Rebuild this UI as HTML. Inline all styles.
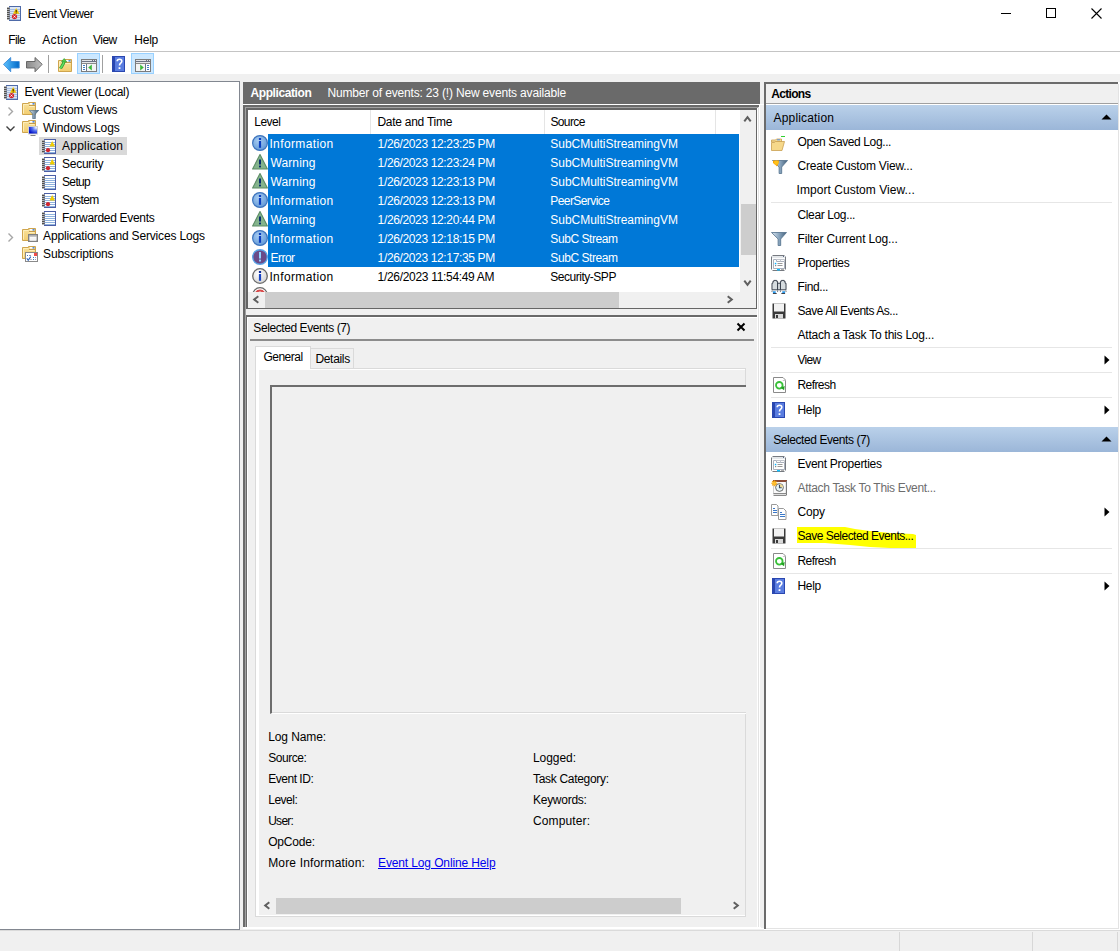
<!DOCTYPE html><html><head><meta charset="utf-8"><style>
html,body{margin:0;padding:0;width:1120px;height:951px;overflow:hidden;background:#f0f0f0;position:relative}
.t{position:absolute;font-family:"Liberation Sans",sans-serif;font-size:12px;line-height:14px;white-space:nowrap;color:#000;letter-spacing:-0.1px}
.r{position:absolute;overflow:visible}
</style></head><body>
<svg width="0" height="0" style="position:absolute"><defs>
<symbol id="spiral" viewBox="0 0 3 15"><path d="M1.5 1.5v12" stroke="#707070" stroke-width="3" stroke-dasharray="1 1"/></symbol>
<symbol id="log" viewBox="0 0 14 15">
 <rect x="2.5" y="0.5" width="11" height="14" fill="#fff" stroke="#4b5ea6"/>
 <path d="M3 3.5h10M3 5.5h10M3 7.5h10M3 9.5h10M3 11.5h10M3 13.5h10" stroke="#8fb3de"/>
 <rect x="0" y="1" width="2.6" height="13" fill="#b4b4b4"/><path d="M1.3 2v12" stroke="#505050" stroke-width="2.6" stroke-dasharray="1 1"/>
</symbol>
<symbol id="logw" viewBox="0 0 14 15">
 <use href="#log" width="14" height="15"/>
 <path d="M7.5 7.5L10.2 2L13 7.5Z" fill="#f2cd00"/>
 <circle cx="6" cy="11.2" r="2.1" fill="#d0242c"/>
</symbol>
<symbol id="evroot" viewBox="0 0 14 15">
 <rect x="2.5" y="0.5" width="11" height="14" fill="#dce7f6" stroke="#4e6aa8"/>
 <path d="M3 3.5h10M3 5.5h10M3 7.5h10M3 9.5h10M3 11.5h10M3 13.5h10" stroke="#a9bfe0"/>
 <rect x="0" y="1" width="2.6" height="13" fill="#b4b4b4"/><path d="M1.3 2v12" stroke="#505050" stroke-width="2.6" stroke-dasharray="1 1"/>
 <path d="M6 7.8L9.2 2L12.4 7.8Z" fill="#f4c400"/>
 <path d="M9.2 4v2.2M9.2 6.8v0.8" stroke="#3a2a00" stroke-width="1.1"/>
 <circle cx="7.5" cy="10.6" r="2.6" fill="#d3262d"/>
 <path d="M6.5 9.6l2 2M8.5 9.6l-2 2" stroke="#fff" stroke-width="0.9"/>
</symbol>
<symbol id="folder" viewBox="0 0 16 14">
 <defs><linearGradient id="gfo" x1="0" y1="0" x2="0" y2="1"><stop offset="0" stop-color="#f9e29c"/><stop offset="1" stop-color="#f2cd70"/></linearGradient></defs>
 <path d="M0.5 1.5H6.5V0.5H13.5V12.5H0.5Z" fill="url(#gfo)" stroke="#cfa54e"/>
 <path d="M1.5 11.5V2.5H6.3L7.3 4.5H12.5" fill="none" stroke="#fdeebb"/>
 <path d="M6.8 3.5H13.3" stroke="#c89d48"/>
 <rect x="8" y="1" width="3" height="1.6" fill="#fff"/>
 <rect x="10.5" y="1" width="2" height="1.6" fill="#4f8ae6"/>
</symbol>
<symbol id="funnelov" viewBox="0 0 10 9">
 <defs><linearGradient id="gfov" x1="0" x2="1"><stop offset="0" stop-color="#d8e6f0"/><stop offset="1" stop-color="#3a5670"/></linearGradient></defs>
 <path d="M0.3 0.3h9.4l-3.4 3.8v4.6h-2.6v-4.6z" fill="url(#gfov)" stroke="#4a6882" stroke-width="0.7"/>
</symbol>
<symbol id="monov" viewBox="0 0 10 10">
 <defs><radialGradient id="gmon" cx="0.85" cy="0.15" r="0.9"><stop offset="0" stop-color="#f4f8ff"/><stop offset="0.45" stop-color="#5c78f0"/><stop offset="1" stop-color="#0010c8"/></radialGradient></defs>
 <rect x="0.5" y="0.5" width="9" height="7.5" fill="url(#gmon)" stroke="#cfcfcf"/>
 <path d="M2.5 9.5h5" stroke="#808080"/>
</symbol>
<symbol id="winov" viewBox="0 0 10 8">
 <rect x="0.7" y="0.7" width="8.6" height="6.6" fill="#fff" stroke="#808080" stroke-width="1.4"/>
 <rect x="1.4" y="1.4" width="7.2" height="1.2" fill="#a0a0a0"/>
 <rect x="2" y="3.5" width="6" height="3" fill="#f4f4f4"/>
</symbol>
<symbol id="subov" viewBox="0 0 13 10">
 <rect x="0.5" y="0.5" width="12" height="9" fill="#fff" stroke="#8a8a8a"/>
 <rect x="9" y="1" width="3" height="3" fill="#f04a4a"/>
 <rect x="2" y="3" width="1" height="1" fill="#3c7cc0"/><rect x="4" y="3" width="2" height="1" fill="#9a98b8"/>
 <rect x="8" y="5" width="1" height="1" fill="#3c7cc0"/><rect x="10" y="5" width="1" height="1" fill="#9a98b8"/>
 <rect x="8" y="7" width="1" height="1" fill="#3c7cc0"/><rect x="10" y="7" width="1" height="1" fill="#9a98b8"/>
 <rect x="5" y="7" width="2" height="1" fill="#b8b8c8"/>
 <path d="M1.8 6.2l1.4 2l2.6 -3.6" stroke="#2a62b8" stroke-width="1.1" fill="none"/>
</symbol>
<symbol id="info_sel" viewBox="0 0 16 16">
 <defs><radialGradient id="gis" cx="0.4" cy="0.35" r="0.7"><stop offset="0" stop-color="#a9cdf2"/><stop offset="1" stop-color="#5f97d6"/></radialGradient></defs>
 <circle cx="8" cy="8" r="7.4" fill="url(#gis)" stroke="#3d74bd" stroke-width="1.2"/>
 <rect x="6.9" y="6" width="2.2" height="6.8" fill="#0a3dc0"/>
 <rect x="6.9" y="3" width="2.2" height="2" fill="#0a3dc0"/>
</symbol>
<symbol id="warn_sel" viewBox="0 0 16 16">
 <path d="M8 0.6L15.4 15H0.6Z" fill="#84b48c" stroke="#5c8c66" stroke-width="1.1" stroke-linejoin="round"/>
 <rect x="7" y="5.5" width="2" height="5" fill="#082b6e"/>
 <rect x="7" y="11.6" width="2" height="1.8" fill="#082b6e"/>
</symbol>
<symbol id="err_sel" viewBox="0 0 16 16">
 <circle cx="8" cy="8" r="7.3" fill="#6a4a88" stroke="#58a2e6" stroke-width="1.4"/>
 <rect x="7" y="3" width="2" height="6.5" fill="#8fd4ff"/>
 <rect x="7" y="10.6" width="2" height="1.9" fill="#8fd4ff"/>
</symbol>
<symbol id="info_un" viewBox="0 0 16 16">
 <defs><radialGradient id="giu" cx="0.4" cy="0.35" r="0.75"><stop offset="0" stop-color="#ffffff"/><stop offset="1" stop-color="#cfcfcf"/></radialGradient></defs>
 <circle cx="8" cy="8" r="7.3" fill="url(#giu)" stroke="#6a6a6a" stroke-width="1.3"/>
 <rect x="6.9" y="6" width="2.2" height="6.8" fill="#1846c4"/>
 <rect x="6.9" y="3" width="2.2" height="2" fill="#0a2a9a"/>
</symbol>
<symbol id="helpq" viewBox="0 0 13 16">
 <rect x="0" y="0" width="13" height="16" fill="#2a47b0"/>
 <rect x="3" y="1" width="9" height="14" fill="#5a7de0"/>
 <path d="M5.2 5.2c0-2.6 4.6-2.6 4.6 0c0 2-2.3 2-2.3 4.2" fill="none" stroke="#fff" stroke-width="1.6"/>
 <rect x="6.6" y="11.2" width="1.8" height="1.8" fill="#fff"/>
</symbol>
<symbol id="floppy" viewBox="0 0 14 16">
 <path d="M0.5 0.5h13v15h-13z" fill="#3a3a3a"/>
 <rect x="2" y="0.5" width="10" height="8" fill="#f2f2f2"/>
 <rect x="3" y="11" width="8" height="4.5" fill="#d9d9d9"/>
 <rect x="4" y="12" width="2" height="3" fill="#3a3a3a"/>
</symbol>
<symbol id="refresh" viewBox="0 0 13 16">
 <path d="M0.5 0.5h9.5l2.5 2.5v12.5h-12z" fill="#fff" stroke="#8a8a8a"/>
 <path d="M9.8 3.5h2.7" stroke="#c8c8c8"/>
 <circle cx="6.3" cy="8.3" r="3.3" fill="none" stroke="#38c038" stroke-width="1.8"/>
 <path d="M7.5 10.8l4.2 -1.8l-0.6 4.2z" fill="#22a022"/>
</symbol>
<symbol id="props" viewBox="0 0 15 16">
 <rect x="1" y="1" width="13" height="14" fill="#fdfdfd"/>
 <path d="M1.5 0.5H13.5M0.5 1.5V14.5M14.5 1.5V14.5M1.5 15.5H13.5" stroke="#767a80"/>
 <rect x="1" y="1" width="13" height="2" fill="#e4e7ea"/>
 <rect x="12" y="1" width="1" height="1" fill="#5a6a88"/>
 <path d="M2.5 13.5V4.5H5.5V6.5H13.5V13.5Z" fill="#fff" stroke="#aab0bc"/>
 <path d="M5.5 4.5H13.5V6.5M9.5 4.5V6.5" fill="none" stroke="#c0c4cc"/>
 <rect x="3.8" y="7.8" width="1.5" height="1.5" fill="#10b4ff"/>
 <rect x="4" y="10" width="1.2" height="1.2" fill="#888"/>
 <path d="M6.5 8.5h5M6.5 10.5h5" stroke="#999"/>
 <rect x="6" y="14" width="3" height="1.5" fill="#10c0ff"/>
 <rect x="10" y="14" width="3" height="1" fill="#b0b0b0"/>
</symbol>
<symbol id="binoc" viewBox="0 0 16 16">
 <path d="M0.5 11.5V4.5h1v-2h1v-1h3v1h1v9z" fill="#d6dcdf" stroke="#343c48"/>
 <path d="M15.5 11.5V4.5h-1v-2h-1v-1h-3v1h-1v9z" fill="#d6dcdf" stroke="#343c48"/>
 <rect x="6.5" y="4.5" width="3" height="7" fill="#d6dcdf" stroke="#343c48"/>
 <path d="M3 13v2M13 13v2" stroke="#2a96e8" stroke-width="3"/>
 <path d="M0.5 12.5v1M6.5 12.5v1M9.5 12.5v1M15.5 12.5v1M1.5 15.5h4M10.5 15.5h4" stroke="#2a3038"/>
</symbol>
<symbol id="funnel" viewBox="0 0 16 14">
 <defs><linearGradient id="gf" x1="0" x2="1"><stop offset="0" stop-color="#dfe9f2"/><stop offset="0.5" stop-color="#8aa6bf"/><stop offset="1" stop-color="#44607a"/></linearGradient></defs>
 <path d="M0.5 0.5h15l-5.8 6.5v6.5h-2.6v-6.5z" fill="url(#gf)" stroke="#52708c" stroke-width="0.8"/>
</symbol>
<symbol id="funnelstar" viewBox="0 0 16 14">
 <use href="#funnel" width="16" height="14"/>
 <path d="M1 0.5h6l-0.5 3l-1.5 3l-1.5 -1.5l-2.5 -2z" fill="#ffa500"/>
 <circle cx="4.3" cy="2.6" r="2.2" fill="#ffc21a"/>
</symbol>
<symbol id="openfold" viewBox="0 0 15 15">
 <rect x="10" y="0" width="4" height="1" fill="#30d030"/>
 <path d="M0.5 4h4l1 -1h5v3h-10z" fill="#f5dc94" stroke="#c9a050" stroke-width="0.8"/>
 <path d="M0.5 14.5v-8h3l1 -1h9l-2.5 9z" fill="#f6d88a" stroke="#c9a050" stroke-width="0.8"/>
 <rect x="6" y="3.3" width="3" height="1" fill="#5a90e0"/>
</symbol>
<symbol id="clock" viewBox="0 0 16 16">
 <rect x="2.5" y="1.5" width="12.5" height="12.5" fill="#fafafa" stroke="#d0d0d0"/>
 <rect x="2" y="0" width="14" height="2" fill="#8c4c38"/>
 <rect x="15" y="1" width="1" height="14" fill="#7a7a7a"/>
 <path d="M2.5 13.5h13M2.5 15.5h13" stroke="#8a8a8a"/>
 <rect x="3" y="14" width="12" height="1" fill="#dedede"/>
 <circle cx="8.5" cy="7.5" r="3.9" fill="#e6f4f8" stroke="#5a5a5a" stroke-width="0.9"/>
 <path d="M8.5 7.5V3.9A3.6 3.6 0 0 1 12.1 7.5Z" fill="#f0dc98"/>
 <path d="M8.5 4.8v3h2.2" stroke="#3a4a60" fill="none" stroke-width="1.1"/>
 <path d="M3.3 0.3v6M0.3 3.3h6M1.2 1.2l4.2 4.2M5.4 1.2L1.2 5.4" stroke="#f4a000" stroke-width="1.1"/>
 <circle cx="3.3" cy="3.3" r="1.8" fill="#ffc030"/>
</symbol>
<symbol id="copy" viewBox="0 0 16 16">
 <path d="M0.5 0.5h5l1.5 1.5v9.5h-6.5z" fill="#fff" stroke="#9a9a9a"/>
 <path d="M7.5 4.5h5l2.5 2.5v8.5h-7.5z" fill="#fff" stroke="#9a9a9a"/>
 <path d="M2 4.5h2M2 6.5h4M2 8.5h4M9 8.5h2M9 10.5h5M9 12.5h5" stroke="#3a78c8"/>
</symbol>
<symbol id="pane" viewBox="0 0 16 13">
 <rect x="0.5" y="0.5" width="15" height="12" fill="#fff" stroke="#7c7c7c"/>
 <rect x="1" y="1" width="14" height="1" fill="#e2e4e8"/>
 <rect x="11" y="1" width="1" height="1" fill="#6a7080"/><rect x="13" y="1" width="1" height="1" fill="#6a7080"/>
 <rect x="1" y="2" width="14" height="1" fill="#6b7282"/>
 <rect x="1" y="3" width="14" height="1" fill="#e4e6ea"/>
 <rect x="1" y="4" width="14" height="1" fill="#8a8a8a"/>
</symbol>
</defs></svg>
<div class="r" style="left:0px;top:0px;width:1120px;height:51px;background:#fff"></div>
<div class="r" style="left:0px;top:51px;width:1120px;height:1px;background:#c4c4c4"></div>
<div class="r" style="left:0px;top:52px;width:1120px;height:22px;background:#fff"></div>
<div class="r" style="left:0px;top:74px;width:1120px;height:7px;background:#f0f0f0"></div>
<svg class="r" style="left:7px;top:6px" width="14" height="15"><use href="#evroot" width="14" height="15"/></svg>
<div class="t" style="left:27.7px;top:7px;;letter-spacing:-0.403px">Event Viewer</div>
<div class="r" style="left:1001px;top:13px;width:10px;height:1px;background:#000"></div>
<div class="r" style="left:1046px;top:8px;width:10px;height:10px;border:1px solid #000;box-sizing:border-box"></div>
<svg class="r" style="left:1091px;top:8px;" width="11" height="11" viewBox="0 0 11 11"><path d="M0.5 0.5L10.5 10.5M10.5 0.5L0.5 10.5" stroke="#000" stroke-width="1.1"/></svg>
<div class="t" style="left:8.3px;top:33px;;letter-spacing:-0.621px">File</div>
<div class="t" style="left:42.2px;top:33px;;letter-spacing:0.344px">Action</div>
<div class="t" style="left:92.9px;top:33px;;letter-spacing:-0.476px">View</div>
<div class="t" style="left:134.3px;top:33px;;letter-spacing:-0.235px">Help</div>
<svg class="r" style="left:3px;top:57px;" width="17" height="15" viewBox="0 0 17 15"><defs><linearGradient id="gba" x1="0" x2="1"><stop offset="0" stop-color="#5ec3ff"/><stop offset="1" stop-color="#0068c8"/></linearGradient></defs><path d="M0.5 7.3L7.7 0.5v4h8.5v6.5h-8.5v3.8z" fill="url(#gba)" stroke="#3c8ad8" stroke-width="0.9" stroke-linejoin="round"/></svg>
<svg class="r" style="left:26px;top:57px;" width="17" height="15" viewBox="0 0 17 15"><defs><linearGradient id="gfa" x1="0" x2="1"><stop offset="0" stop-color="#8a8a8a"/><stop offset="1" stop-color="#c0c0c0"/></linearGradient></defs><path d="M16.2 7.3L9 0.5v4h-8.5v6.5h8.5v3.8z" fill="url(#gfa)" stroke="#5c5c5c" stroke-width="0.9" stroke-linejoin="round"/></svg>
<div class="r" style="left:48px;top:55px;width:1px;height:18px;background:#a0a0a0"></div>
<svg class="r" style="left:58px;top:59px;overflow:visible" width="16" height="14" viewBox="0 0 16 14"><use href="#folder" width="16" height="14"/><path d="M2.5 9.5C3.5 7 5.5 6 6 2.5" stroke="#2e9a2e" stroke-width="3" fill="none"/><path d="M2.5 9.5C3.5 7 5.5 6 6 2.5" stroke="#62e062" stroke-width="1.6" fill="none"/><path d="M3.5 2.5L6.2 -0.5L8.8 3z" fill="#4cd04c" stroke="#2e9a2e" stroke-width="0.6"/></svg>
<div class="r" style="left:77px;top:53px;width:23px;height:21px;background:#cce8ff;border:1px solid #99d1ff;box-sizing:border-box"></div>
<svg class="r" style="left:81px;top:59px;" width="16" height="13" viewBox="0 0 16 13"><use href="#pane" width="16" height="13"/><rect x="5" y="5" width="1" height="7" fill="#66778c"/><rect x="6" y="5" width="9" height="7" fill="#f4f4f4"/><path d="M2 6.5h2M2 8.5h2M2 10.5h2" stroke="#3f7cc4"/><path d="M10.8 5.6v5.8l-3.6-2.9z" fill="#3ab83a"/></svg>
<div class="r" style="left:102px;top:55px;width:1px;height:18px;background:#a0a0a0"></div>
<svg class="r" style="left:112px;top:56px" width="13" height="16"><use href="#helpq" width="13" height="16"/></svg>
<div class="r" style="left:131px;top:53px;width:23px;height:21px;background:#cce8ff;border:1px solid #99d1ff;box-sizing:border-box"></div>
<svg class="r" style="left:135px;top:59px;" width="16" height="13" viewBox="0 0 16 13"><use href="#pane" width="16" height="13"/><rect x="10" y="5" width="1" height="7" fill="#66778c"/><rect x="1" y="5" width="9" height="7" fill="#f4f4f4"/><path d="M12 6.5h2M12 8.5h2M12 10.5h2" stroke="#3f7cc4"/><path d="M5.2 5.6v5.8l3.6-2.9z" fill="#3ab83a"/></svg>
<div class="r" style="left:0px;top:81px;width:240px;height:849px;background:#fff;border-top:1px solid #828790;border-right:1px solid #828790;border-bottom:1px solid #828790;box-sizing:border-box"></div>
<div class="r" style="left:39px;top:137px;width:88px;height:18px;background:#d9d9d9"></div>
<div class="t" style="left:24.4px;top:85px;;letter-spacing:-0.289px">Event Viewer (Local)</div>
<div class="t" style="left:43.1px;top:103px;;letter-spacing:-0.188px">Custom Views</div>
<div class="t" style="left:43.1px;top:121px;;letter-spacing:-0.130px">Windows Logs</div>
<div class="t" style="left:62px;top:139px;;letter-spacing:0.227px">Application</div>
<div class="t" style="left:62px;top:157px;;letter-spacing:-0.264px">Security</div>
<div class="t" style="left:62px;top:175px;;letter-spacing:-0.646px">Setup</div>
<div class="t" style="left:62px;top:193px;;letter-spacing:-0.542px">System</div>
<div class="t" style="left:62px;top:211px;;letter-spacing:-0.312px">Forwarded Events</div>
<div class="t" style="left:43.1px;top:229px;;letter-spacing:-0.171px">Applications and Services Logs</div>
<div class="t" style="left:43.1px;top:247px;;letter-spacing:-0.128px">Subscriptions</div>
<svg class="r" style="left:4px;top:85px" width="14" height="15"><use href="#evroot" width="14" height="15"/></svg>
<svg class="r" style="left:7px;top:106px;" width="8" height="11" viewBox="0 0 8 11"><path d="M1.5 1.5L5.5 5.5L1.5 9.5" stroke="#a6a6a6" stroke-width="1.4" fill="none"/></svg>
<svg class="r" style="left:5px;top:125px;" width="11" height="8" viewBox="0 0 11 8"><path d="M1.5 1.5L5.5 5.5L9.5 1.5" stroke="#404040" stroke-width="1.4" fill="none"/></svg>
<svg class="r" style="left:7px;top:232px;" width="8" height="11" viewBox="0 0 8 11"><path d="M1.5 1.5L5.5 5.5L1.5 9.5" stroke="#a6a6a6" stroke-width="1.4" fill="none"/></svg>
<svg class="r" style="left:22px;top:102px" width="16" height="14"><use href="#folder" width="16" height="14"/></svg>
<svg class="r" style="left:22px;top:120px" width="16" height="14"><use href="#folder" width="16" height="14"/></svg>
<svg class="r" style="left:22px;top:228px" width="16" height="14"><use href="#folder" width="16" height="14"/></svg>
<svg class="r" style="left:22px;top:246px" width="16" height="14"><use href="#folder" width="16" height="14"/></svg>
<svg class="r" style="left:29px;top:110px" width="10" height="9"><use href="#funnelov" width="10" height="9"/></svg>
<svg class="r" style="left:28px;top:126px" width="10" height="10"><use href="#monov" width="10" height="10"/></svg>
<svg class="r" style="left:28px;top:234px" width="10" height="8"><use href="#winov" width="10" height="8"/></svg>
<svg class="r" style="left:25px;top:252px" width="13" height="10"><use href="#subov" width="13" height="10"/></svg>
<svg class="r" style="left:42px;top:139px" width="14" height="15"><use href="#logw" width="14" height="15"/></svg>
<svg class="r" style="left:42px;top:157px" width="14" height="15"><use href="#logw" width="14" height="15"/></svg>
<svg class="r" style="left:42px;top:175px" width="14" height="15"><use href="#log" width="14" height="15"/></svg>
<svg class="r" style="left:42px;top:193px" width="14" height="15"><use href="#logw" width="14" height="15"/></svg>
<svg class="r" style="left:42px;top:211px" width="14" height="15"><use href="#log" width="14" height="15"/></svg>
<div class="r" style="left:243px;top:82px;width:517px;height:22px;background:#6a6a6a"></div>
<div class="t" style="left:250.5px;top:86px;color:#fff;font-weight:bold;letter-spacing:-0.410px">Application</div>
<div class="t" style="left:327.5px;top:86px;color:#fff;letter-spacing:-0.171px">Number of events: 23 (!) New events available</div>
<div class="r" style="left:243px;top:104px;width:521px;height:1px;background:#fff"></div>
<div class="r" style="left:243px;top:105px;width:518px;height:822px;background:#f0f0f0"></div>
<div class="r" style="left:243px;top:105px;width:516px;height:2px;background:#6a6a6a"></div>
<div class="r" style="left:243px;top:105px;width:2px;height:822px;background:#6a6a6a"></div>
<div class="r" style="left:245px;top:107px;width:514px;height:1px;background:#a0a0a0"></div>
<div class="r" style="left:245px;top:107px;width:1px;height:820px;background:#a0a0a0"></div>
<div class="r" style="left:246px;top:108px;width:511px;height:201px;background:#666"></div>
<div class="r" style="left:248px;top:110px;width:508px;height:198px;background:#fff"></div>
<div class="r" style="left:757px;top:108px;width:1px;height:819px;background:#fff"></div>
<div class="r" style="left:758px;top:107px;width:1px;height:820px;background:#e3e3e3"></div>
<div class="r" style="left:759px;top:105px;width:1px;height:822px;background:#fff"></div>
<div class="r" style="left:243px;top:927px;width:518px;height:1px;background:#fff"></div>
<div class="t" style="left:254.3px;top:115px;;letter-spacing:-0.530px">Level</div>
<div class="t" style="left:377.4px;top:115px;;letter-spacing:-0.257px">Date and Time</div>
<div class="t" style="left:550.4px;top:115px;;letter-spacing:-0.610px">Source</div>
<div class="r" style="left:370px;top:110px;width:1px;height:24px;background:#e5e5e5"></div>
<div class="r" style="left:544px;top:110px;width:1px;height:24px;background:#e5e5e5"></div>
<div class="r" style="left:715px;top:110px;width:1px;height:24px;background:#e5e5e5"></div>
<div class="r" style="left:268px;top:134px;width:471px;height:133px;background:#0078d7"></div>
<div class="t" style="left:269.4px;top:137px;color:#fff;letter-spacing:0.384px">Information</div>
<div class="t" style="left:377.6px;top:137px;color:#fff;letter-spacing:-0.358px">1/26/2023 12:23:25 PM</div>
<div class="t" style="left:550.3px;top:137px;color:#fff;letter-spacing:-0.024px">SubCMultiStreamingVM</div>
<svg class="r" style="left:252px;top:135px" width="16" height="16"><use href="#info_sel" width="16" height="16"/></svg>
<div class="t" style="left:270.4px;top:156px;color:#fff;letter-spacing:0.139px">Warning</div>
<div class="t" style="left:377.6px;top:156px;color:#fff;letter-spacing:-0.358px">1/26/2023 12:23:24 PM</div>
<div class="t" style="left:550.3px;top:156px;color:#fff;letter-spacing:-0.024px">SubCMultiStreamingVM</div>
<svg class="r" style="left:252px;top:154px" width="16" height="16"><use href="#warn_sel" width="16" height="16"/></svg>
<div class="t" style="left:270.4px;top:175px;color:#fff;letter-spacing:0.139px">Warning</div>
<div class="t" style="left:377.6px;top:175px;color:#fff;letter-spacing:-0.358px">1/26/2023 12:23:13 PM</div>
<div class="t" style="left:550.3px;top:175px;color:#fff;letter-spacing:-0.024px">SubCMultiStreamingVM</div>
<svg class="r" style="left:252px;top:173px" width="16" height="16"><use href="#warn_sel" width="16" height="16"/></svg>
<div class="t" style="left:269.4px;top:194px;color:#fff;letter-spacing:0.384px">Information</div>
<div class="t" style="left:377.6px;top:194px;color:#fff;letter-spacing:-0.358px">1/26/2023 12:23:13 PM</div>
<div class="t" style="left:550.3px;top:194px;color:#fff;letter-spacing:-0.579px">PeerService</div>
<svg class="r" style="left:252px;top:192px" width="16" height="16"><use href="#info_sel" width="16" height="16"/></svg>
<div class="t" style="left:270.4px;top:213px;color:#fff;letter-spacing:0.139px">Warning</div>
<div class="t" style="left:377.6px;top:213px;color:#fff;letter-spacing:-0.358px">1/26/2023 12:20:44 PM</div>
<div class="t" style="left:550.3px;top:213px;color:#fff;letter-spacing:-0.024px">SubCMultiStreamingVM</div>
<svg class="r" style="left:252px;top:211px" width="16" height="16"><use href="#warn_sel" width="16" height="16"/></svg>
<div class="t" style="left:269.4px;top:232px;color:#fff;letter-spacing:0.384px">Information</div>
<div class="t" style="left:377.6px;top:232px;color:#fff;letter-spacing:-0.358px">1/26/2023 12:18:15 PM</div>
<div class="t" style="left:550.3px;top:232px;color:#fff;letter-spacing:-0.423px">SubC Stream</div>
<svg class="r" style="left:252px;top:230px" width="16" height="16"><use href="#info_sel" width="16" height="16"/></svg>
<div class="t" style="left:270.4px;top:251px;color:#fff;letter-spacing:-0.492px">Error</div>
<div class="t" style="left:377.6px;top:251px;color:#fff;letter-spacing:-0.358px">1/26/2023 12:17:35 PM</div>
<div class="t" style="left:550.3px;top:251px;color:#fff;letter-spacing:-0.423px">SubC Stream</div>
<svg class="r" style="left:252px;top:249px" width="16" height="16"><use href="#err_sel" width="16" height="16"/></svg>
<div class="t" style="left:269.4px;top:270px;color:#000;letter-spacing:0.384px">Information</div>
<div class="t" style="left:377.6px;top:270px;color:#000;letter-spacing:-0.314px">1/26/2023 11:54:49 AM</div>
<div class="t" style="left:550.3px;top:270px;color:#000;letter-spacing:-0.477px">Security-SPP</div>
<svg class="r" style="left:252px;top:268px" width="16" height="16"><use href="#info_un" width="16" height="16"/></svg>
<svg class="r" style="left:252px;top:287px;" width="16" height="5" viewBox="0 0 16 5"><circle cx="8" cy="8" r="7.3" fill="#fff" stroke="#6a6a6a" stroke-width="1.3"/><path d="M4 5.5a5 5 0 0 1 8 0" stroke="#d84a4a" stroke-width="2" fill="none"/></svg>
<div class="r" style="left:740px;top:110px;width:16px;height:182px;background:#f0f0f0"></div>
<div class="r" style="left:741px;top:204px;width:15px;height:51px;background:#cdcdcd"></div>
<svg class="r" style="left:743px;top:115px;" width="9" height="8" viewBox="0 0 9 8"><path d="M1.3 6.3L4.5 2.2L7.7 6.3" stroke="#5f5f5f" stroke-width="2" fill="none"/></svg>
<svg class="r" style="left:743px;top:279px;" width="9" height="8" viewBox="0 0 9 8"><path d="M1.3 1.7L4.5 5.8L7.7 1.7" stroke="#5f5f5f" stroke-width="2" fill="none"/></svg>
<div class="r" style="left:248px;top:292px;width:508px;height:16px;background:#f0f0f0"></div>
<div class="r" style="left:265px;top:292px;width:354px;height:16px;background:#cdcdcd"></div>
<svg class="r" style="left:252px;top:295px;" width="8" height="9" viewBox="0 0 8 9"><path d="M6.3 1.3L2.2 4.5L6.3 7.7" stroke="#5f5f5f" stroke-width="2" fill="none"/></svg>
<svg class="r" style="left:726px;top:295px;" width="8" height="9" viewBox="0 0 8 9"><path d="M1.7 1.3L5.8 4.5L1.7 7.7" stroke="#5f5f5f" stroke-width="2" fill="none"/></svg>
<div class="r" style="left:246px;top:315px;width:511px;height:612px;background:#f0f0f0"></div>
<div class="r" style="left:246px;top:315px;width:511px;height:2px;background:#696969"></div>
<div class="r" style="left:246px;top:315px;width:1px;height:612px;background:#696969"></div>
<div class="r" style="left:247px;top:317px;width:510px;height:1px;background:#fff"></div>
<div class="r" style="left:247px;top:317px;width:1px;height:610px;background:#fff"></div>
<div class="t" style="left:253.3px;top:321px;;letter-spacing:-0.418px">Selected Events (7)</div>
<svg class="r" style="left:736px;top:322px;" width="10" height="10" viewBox="0 0 10 10"><path d="M1.5 1.5L8.5 8.5M8.5 1.5L1.5 8.5" stroke="#000" stroke-width="2"/></svg>
<div class="r" style="left:250px;top:339px;width:504px;height:2px;background:#8c8c8c"></div>
<div class="r" style="left:255px;top:368px;width:491px;height:549px;background:#fff;border:1px solid #dadada;box-sizing:border-box"></div>
<div class="r" style="left:259px;top:370px;width:486px;height:545px;background:#f0f0f0"></div>
<div class="r" style="left:255px;top:346px;width:56px;height:23px;background:#fff;border:1px solid #dadada;border-bottom:none;box-sizing:border-box"></div>
<div class="r" style="left:310px;top:348px;width:44px;height:20px;background:#f0f0f0;border:1px solid #dadada;border-bottom:none;box-sizing:border-box"></div>
<div class="t" style="left:263.4px;top:350px;;letter-spacing:-0.488px">General</div>
<div class="t" style="left:315.4px;top:352px;;letter-spacing:-0.313px">Details</div>
<div class="r" style="left:270px;top:385px;width:476px;height:329px;background:#f0f0f0;border-left:2px solid #6d6d6d;border-top:2px solid #6d6d6d;border-bottom:1px solid #fff;box-shadow:inset 0 -1px 0 #dadada;box-sizing:border-box"></div>
<div class="t" style="left:268.2px;top:730px;;letter-spacing:-0.096px">Log Name:</div>
<div class="t" style="left:268.2px;top:751px;;letter-spacing:-0.454px">Source:</div>
<div class="t" style="left:268.2px;top:772px;;letter-spacing:-0.477px">Event ID:</div>
<div class="t" style="left:268.2px;top:793px;;letter-spacing:-0.477px">Level:</div>
<div class="t" style="left:268.2px;top:814px;;letter-spacing:-0.734px">User:</div>
<div class="t" style="left:268.2px;top:835px;;letter-spacing:-0.199px">OpCode:</div>
<div class="t" style="left:268.2px;top:856px;;letter-spacing:0.162px">More Information:</div>
<div class="t" style="left:533px;top:751px;;letter-spacing:-0.057px">Logged:</div>
<div class="t" style="left:533px;top:772px;;letter-spacing:-0.308px">Task Category:</div>
<div class="t" style="left:533px;top:793px;;letter-spacing:-0.273px">Keywords:</div>
<div class="t" style="left:533px;top:814px;;letter-spacing:0.127px">Computer:</div>
<div class="t" style="left:378px;top:856px;color:#0000ee;text-decoration:underline;letter-spacing:-0.125px">Event Log Online Help</div>
<div class="r" style="left:259px;top:898px;width:486px;height:16px;background:#f0f0f0"></div>
<div class="r" style="left:276px;top:898px;width:405px;height:16px;background:#cdcdcd"></div>
<svg class="r" style="left:263px;top:901px;" width="8" height="9" viewBox="0 0 8 9"><path d="M6.3 1.3L2.2 4.5L6.3 7.7" stroke="#5f5f5f" stroke-width="2" fill="none"/></svg>
<svg class="r" style="left:732px;top:901px;" width="8" height="9" viewBox="0 0 8 9"><path d="M1.7 1.3L5.8 4.5L1.7 7.7" stroke="#5f5f5f" stroke-width="2" fill="none"/></svg>
<div class="r" style="left:764px;top:82px;width:355px;height:847px;background:#fff"></div>
<div class="r" style="left:764px;top:82px;width:2px;height:847px;background:#6b6b6b"></div>
<div class="r" style="left:764px;top:82px;width:354px;height:2px;background:#6b6b6b"></div>
<div class="r" style="left:766px;top:84px;width:352px;height:19px;background:#f0f0f0"></div>
<div class="r" style="left:766px;top:103px;width:352px;height:1px;background:#a0a0a0"></div>
<div class="t" style="left:771.25px;top:87px;;font-weight:bold;letter-spacing:-0.697px">Actions</div>
<div class="r" style="left:766px;top:105px;width:352px;height:25px;background:linear-gradient(#bad1ea,#9bb6d8)"></div>
<div class="t" style="left:773.5px;top:111px;;letter-spacing:0.177px">Application</div>
<div class="r" style="left:766px;top:427px;width:352px;height:25px;background:linear-gradient(#bad1ea,#9bb6d8)"></div>
<div class="t" style="left:773.2px;top:433px;;letter-spacing:-0.423px">Selected Events (7)</div>
<svg class="r" style="left:1101px;top:114px;" width="11" height="6" viewBox="0 0 11 6"><path d="M0.5 5.5L5.5 0.5L10.5 5.5z" fill="#000"/></svg>
<svg class="r" style="left:1101px;top:436px;" width="11" height="6" viewBox="0 0 11 6"><path d="M0.5 5.5L5.5 0.5L10.5 5.5z" fill="#000"/></svg>
<svg class="r" style="left:790px;top:520px;" width="130" height="35" viewBox="0 0 130 35"><polygon fill="#ffff00" points="7,7 55,7 65,9 80,11 100,13 123,14 126,15 126,29 100,28 80,27 60,25 35,23 7,23"/></svg>
<div class="t" style="left:797.5px;top:135px;color:#000;letter-spacing:-0.384px">Open Saved Log...</div>
<svg class="r" style="left:771px;top:136px" width="15" height="15"><use href="#openfold" width="15" height="15"/></svg>
<div class="t" style="left:797.5px;top:159px;color:#000;letter-spacing:-0.191px">Create Custom View...</div>
<svg class="r" style="left:772px;top:160px" width="16" height="14"><use href="#funnelstar" width="16" height="14"/></svg>
<div class="t" style="left:796.5px;top:183px;color:#000;letter-spacing:0.054px">Import Custom View...</div>
<div class="t" style="left:797.5px;top:208px;color:#000;letter-spacing:-0.373px">Clear Log...</div>
<div class="t" style="left:797.5px;top:232px;color:#000;letter-spacing:-0.157px">Filter Current Log...</div>
<svg class="r" style="left:771px;top:232px" width="16" height="14"><use href="#funnel" width="16" height="14"/></svg>
<div class="t" style="left:797.5px;top:256px;color:#000;letter-spacing:-0.271px">Properties</div>
<svg class="r" style="left:771px;top:255px" width="15" height="16"><use href="#props" width="15" height="16"/></svg>
<div class="t" style="left:797.5px;top:280px;color:#000;letter-spacing:-0.402px">Find...</div>
<svg class="r" style="left:771px;top:279px" width="16" height="15"><use href="#binoc" width="16" height="15"/></svg>
<div class="t" style="left:797.5px;top:304px;color:#000;letter-spacing:-0.457px">Save All Events As...</div>
<svg class="r" style="left:772px;top:303px" width="14" height="16"><use href="#floppy" width="14" height="16"/></svg>
<div class="t" style="left:797.5px;top:328px;color:#000;letter-spacing:-0.229px">Attach a Task To this Log...</div>
<div class="t" style="left:797.5px;top:353px;color:#000;letter-spacing:-0.709px">View</div>
<div class="t" style="left:797.5px;top:378px;color:#000;letter-spacing:-0.574px">Refresh</div>
<svg class="r" style="left:773px;top:377px" width="13" height="16"><use href="#refresh" width="13" height="16"/></svg>
<div class="t" style="left:797.5px;top:403px;color:#000;letter-spacing:-0.335px">Help</div>
<svg class="r" style="left:772px;top:402px" width="13" height="16"><use href="#helpq" width="13" height="16"/></svg>
<div class="t" style="left:797.5px;top:457px;color:#000;letter-spacing:-0.287px">Event Properties</div>
<svg class="r" style="left:771px;top:456px" width="15" height="16"><use href="#props" width="15" height="16"/></svg>
<div class="t" style="left:797.5px;top:481px;color:#6d6d6d;letter-spacing:-0.323px">Attach Task To This Event...</div>
<svg class="r" style="left:771px;top:480px" width="16" height="16"><use href="#clock" width="16" height="16"/></svg>
<div class="t" style="left:797.5px;top:505px;color:#000;letter-spacing:-0.171px">Copy</div>
<svg class="r" style="left:771px;top:504px" width="16" height="16"><use href="#copy" width="16" height="16"/></svg>
<div class="t" style="left:797.5px;top:529px;color:#000;letter-spacing:-0.508px">Save Selected Events...</div>
<svg class="r" style="left:772px;top:528px" width="14" height="16"><use href="#floppy" width="14" height="16"/></svg>
<div class="t" style="left:797.5px;top:554px;color:#000;letter-spacing:-0.574px">Refresh</div>
<svg class="r" style="left:773px;top:553px" width="13" height="16"><use href="#refresh" width="13" height="16"/></svg>
<div class="t" style="left:797.5px;top:579px;color:#000;letter-spacing:-0.335px">Help</div>
<svg class="r" style="left:772px;top:578px" width="13" height="16"><use href="#helpq" width="13" height="16"/></svg>
<div class="r" style="left:771px;top:202px;width:341px;height:1px;background:#e6e6e6"></div>
<div class="r" style="left:771px;top:347px;width:341px;height:1px;background:#e6e6e6"></div>
<div class="r" style="left:771px;top:372px;width:341px;height:1px;background:#e6e6e6"></div>
<div class="r" style="left:771px;top:397px;width:341px;height:1px;background:#e6e6e6"></div>
<div class="r" style="left:771px;top:548px;width:341px;height:1px;background:#e6e6e6"></div>
<div class="r" style="left:771px;top:573px;width:341px;height:1px;background:#e6e6e6"></div>
<svg class="r" style="left:1104px;top:355px;" width="6" height="10" viewBox="0 0 6 10"><path d="M0.5 0.5L5.5 5L0.5 9.5z" fill="#000"/></svg>
<svg class="r" style="left:1104px;top:405px;" width="6" height="10" viewBox="0 0 6 10"><path d="M0.5 0.5L5.5 5L0.5 9.5z" fill="#000"/></svg>
<svg class="r" style="left:1104px;top:507px;" width="6" height="10" viewBox="0 0 6 10"><path d="M0.5 0.5L5.5 5L0.5 9.5z" fill="#000"/></svg>
<svg class="r" style="left:1104px;top:581px;" width="6" height="10" viewBox="0 0 6 10"><path d="M0.5 0.5L5.5 5L0.5 9.5z" fill="#000"/></svg>
<div class="r" style="left:1118px;top:84px;width:1px;height:845px;background:#e3e3e3"></div>
<div class="r" style="left:1119px;top:82px;width:1px;height:848px;background:#fff"></div>
<div class="r" style="left:766px;top:928px;width:352px;height:1px;background:#e3e3e3"></div>
<div class="r" style="left:764px;top:929px;width:356px;height:1px;background:#fff"></div>
<div class="r" style="left:243px;top:928px;width:521px;height:1px;background:#fff"></div>
<div class="r" style="left:0px;top:930px;width:1120px;height:1px;background:#dadada"></div>
<div class="r" style="left:0px;top:931px;width:1120px;height:20px;background:#f0f0f0"></div>
<div class="r" style="left:899px;top:932px;width:1px;height:19px;background:#d7d7d7"></div>
<div class="r" style="left:1032px;top:932px;width:1px;height:19px;background:#d7d7d7"></div>
<div class="r" style="left:1117px;top:932px;width:1px;height:19px;background:#d7d7d7"></div>
</body></html>
